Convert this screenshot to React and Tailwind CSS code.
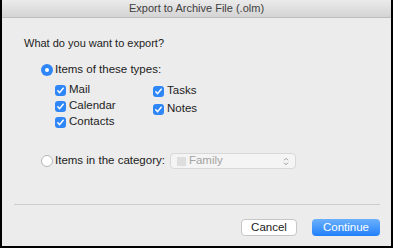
import React from 'react';

const font = { fontFamily: '"Liberation Sans", Arial, sans-serif' };

const Check = ({ label }) => (
    <div className="flex items-center h-[16px]">
        <span className="w-[11px] h-[11px] rounded-[3px] bg-[#2f86f6] flex items-center justify-center">
            <svg width="9" height="9" viewBox="0 0 9 9">
                <path d="M1.8 4.8 L3.6 6.6 L7.2 2.2" fill="none" stroke="white" strokeWidth="1.5" strokeLinecap="round" strokeLinejoin="round" />
            </svg>
        </span>
        <span className="ml-[3px]">{label}</span>
    </div>
);

const Radio = ({ selected, label }) => (
    <div className="flex items-center h-[16px]">
        {selected ? (
            <span className="w-[12px] h-[12px] rounded-full bg-[#2f86f6] flex items-center justify-center">
                <span className="w-[4px] h-[4px] rounded-full bg-white"></span>
            </span>
        ) : (
            <span className="w-[12px] h-[12px] rounded-full bg-white border border-[#b5b5b5]"></span>
        )}
        <span className="ml-[2px]">{label}</span>
    </div>
);

export default function App() {
    return (
        <div className="w-[393px] h-[248px] bg-black pl-[2px] pr-[2px] pb-[2px] flex" style={font}>
            <div className="flex-1 bg-[#ececec] flex flex-col text-[11.5px] text-[#222]">
                {/* title bar */}
                <div className="h-[18px] bg-gradient-to-b from-[#ebebeb] to-[#d4d4d4] border-b border-[#bdbdbd] flex items-center justify-center text-[11px] text-[#404040]">
                    Export to Archive File (.olm)
                </div>

                <div className="pl-[22px] mt-[18px] h-[14px] leading-[14px] text-[11px]">What do you want to export?</div>

                <div className="pl-[39px] mt-[12px]">
                    <Radio selected label="Items of these types:" />
                </div>

                <div className="pl-[53px] mt-[4px] flex">
                    <div className="w-[98px] flex flex-col">
                        <Check label="Mail" />
                        <Check label="Calendar" />
                        <Check label="Contacts" />
                    </div>
                    <div className="flex flex-col gap-[2px] pt-[1px]">
                        <Check label="Tasks" />
                        <Check label="Notes" />
                    </div>
                </div>

                <div className="pl-[39px] mt-[23px] flex items-center">
                    <Radio label="Items in the category:" />
                    <div className="ml-[5px] w-[126px] h-[16px] rounded-[4px] bg-[#f4f4f4] border border-[#d8d8d8] flex items-center px-[6px]">
                        <span className="w-[9px] h-[9px] bg-[#dedede]"></span>
                        <span className="ml-[3px] text-[#a3a3a3]">Family</span>
                        <svg className="ml-auto" width="6" height="9" viewBox="0 0 6 9">
                            <path d="M1 3.3 L3 1.3 L5 3.3 M1 5.7 L3 7.7 L5 5.7" fill="none" stroke="#9a9a9a" strokeWidth="1" />
                        </svg>
                    </div>
                </div>

                <div className="mt-[35px] ml-[12px] mr-[11px] h-[1px] bg-[#cdcdcd]"></div>

                <div className="mt-[14px] pr-[11px] flex justify-end gap-[15px]">
                    <button className="w-[56px] h-[17px] rounded-[4px] bg-white border border-[#c6c6c6] text-[#222] text-[11.5px] leading-none">
                        Cancel
                    </button>
                    <button className="w-[68px] h-[17px] rounded-[4px] bg-gradient-to-b from-[#6ab0fb] to-[#1d80fa] text-white text-[11.5px] leading-none">
                        Continue
                    </button>
                </div>
            </div>
        </div>
    );
}
